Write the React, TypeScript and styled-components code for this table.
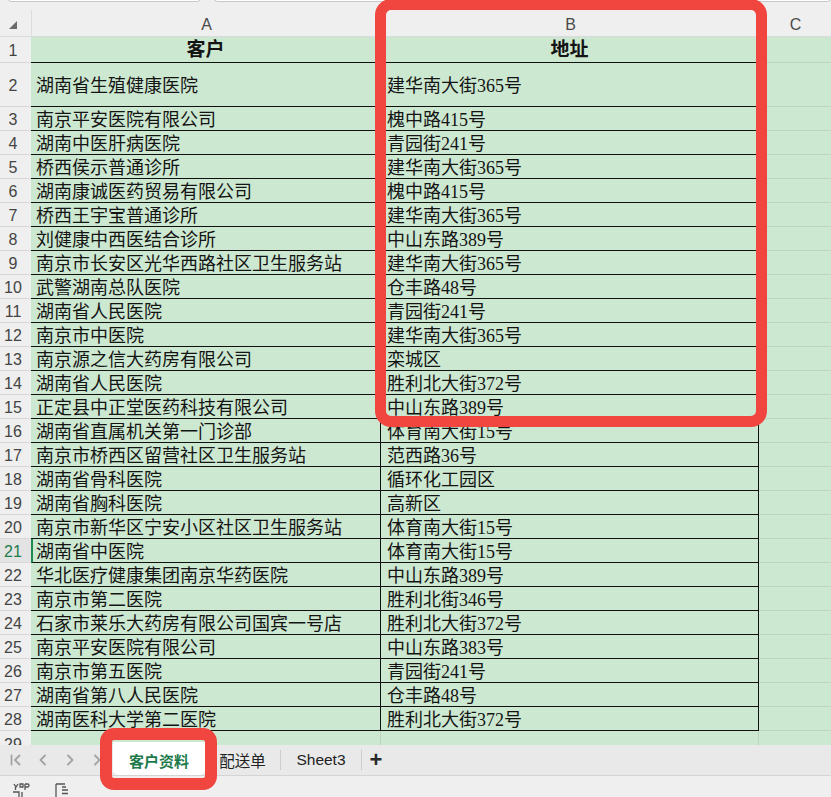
import React from "react";
import styled, { createGlobalStyle } from "styled-components";

const Global = createGlobalStyle`
  html, body { margin: 0; padding: 0; background: #efefef; }
  * { box-sizing: border-box; }
`;

const SERIF = `"Liberation Serif", "Noto Sans CJK SC", serif`;
const SANS = `"Liberation Sans", "Noto Sans CJK SC", sans-serif`;
const GREEN = "#cde8d0";

const Page = styled.div`
  position: relative;
  width: 831px;
  height: 797px;
  overflow: hidden;
  background: #efefef;
  display: flex;
  flex-direction: column;
`;

const TopStrip = styled.div`
  height: 10px;
  display: flex;
  gap: 13px;
  padding-left: 8px;
  background: #efefef;
`;

const InputBox = styled.div<{ $w: number }>`
  width: ${(p) => p.$w}px;
  height: 4px;
  margin-top: -2px;
  background: #fff;
  border: 1px solid #c8c8c8;
  border-top: none;
  border-radius: 0 0 6px 6px;
`;

const Sheet = styled.div`
  display: grid;
  grid-template-columns: 31px 350px 378px 72px;
  grid-template-rows: 27px 26px 44px repeat(26, 24px) 15px;
  overflow: hidden;
`;

const Corner = styled.div`
  background: #efefef;
  display: flex;
  align-items: center;
  padding-left: 9px;
  border-bottom: 1px solid #dadada;
`;

const Tri = styled.div`
  width: 0;
  height: 0;
  border-left: 8px solid transparent;
  border-bottom: 8px solid #6b6b6b;
  margin-top: 4px;
`;

const ColHead = styled.div`
  background: #efefef;
  display: flex;
  align-items: center;
  justify-content: center;
  font-family: ${SANS};
  font-size: 16px;
  color: #4a4a4a;
  border-left: 1px solid #dcdcdc;
  border-bottom: 1px solid #dadada;
  padding-top: 5px;
`;

const RowNum = styled.div<{ $active?: boolean; $cut?: boolean }>`
  background: ${(p) => (p.$active ? "#e3e3e3" : "#efefef")};
  color: ${(p) => (p.$active ? "#1e7b4c" : "#444")};
  font-family: ${SANS};
  font-size: 16px;
  display: flex;
  align-items: ${(p) => (p.$cut ? "flex-start" : "center")};
  justify-content: center;
  padding-right: 5px;
  padding-top: ${(p) => (p.$cut ? 6 : 3)}px;
  border-bottom: 1px solid #d8d8d8;
  line-height: 1;
  overflow: hidden;
`;

const Cell = styled.div<{ $head?: boolean; $active?: boolean; $col: "A" | "B" }>`
  background: ${GREEN};
  border-bottom: 1px solid #111;
  border-right: 1px solid #111;
  border-left: ${(p) => (p.$active ? "2px solid #1e8a50" : "none")};
  font-family: ${SERIF};
  font-size: ${(p) => (p.$head ? "19px" : "18px")};
  font-weight: ${(p) => (p.$head ? 700 : 400)};
  color: #141414;
  display: flex;
  align-items: center;
  justify-content: ${(p) => (p.$head ? "center" : "flex-start")};
  padding-left: ${(p) => (p.$head ? 0 : p.$active ? 3 : p.$col === "A" ? 5 : 6)}px;
  padding-top: ${(p) => (p.$head ? 1 : 3)}px;
  white-space: nowrap;
  overflow: hidden;
  line-height: 1;
`;

const PlainCell = styled.div<{ $edge?: boolean }>`
  background: ${GREEN};
  border-bottom: 1px solid #bfd3c1;
  border-right: 1px solid ${(p) => (p.$edge ? "#bfd3c1" : "transparent")};
`;

const TabBar = styled.div`
  height: 31px;
  display: flex;
  align-items: stretch;
  background: #e9e9e9;
  border-bottom: 1px solid #d4d4d4;
`;

const NavGroup = styled.div`
  width: 113px;
  display: flex;
  align-items: center;
  padding-left: 9px;
  gap: 13px;
`;

const NavIcon = styled.svg`
  width: 14px;
  height: 14px;
  flex: none;
`;

const ActiveTab = styled.div`
  width: 92px;
  margin-top: -3px;
  background: #fff;
  border-radius: 0 0 5px 5px;
  display: flex;
  align-items: center;
  justify-content: center;
  padding-top: 3px;
  font-family: "Noto Sans CJK SC", sans-serif;
  font-weight: 700;
  font-size: 15px;
  color: #1c7a4a;
`;

const Tab = styled.div<{ $w: number }>`
  width: ${(p) => p.$w}px;
  display: flex;
  align-items: center;
  justify-content: center;
  font-family: ${SANS};
  font-size: 15.5px;
  color: #222;
`;

const Sep = styled.div`
  width: 1px;
  align-self: center;
  height: 20px;
  background: #cdcdcd;
`;

const Plus = styled.div`
  width: 28px;
  display: flex;
  align-items: center;
  justify-content: center;
  font-family: ${SANS};
  font-size: 22px;
  font-weight: 700;
  color: #2a2a2a;
`;

const StatusBar = styled.div`
  flex: 1;
  display: flex;
  align-items: flex-start;
  padding: 7px 0 0 12px;
  gap: 24px;
  background: #efefef;
`;

const Mark = styled.div<{ $l: number; $t: number; $w: number; $h: number; $b: number; $r: number }>`
  position: absolute;
  left: ${(p) => p.$l}px;
  top: ${(p) => p.$t}px;
  width: ${(p) => p.$w}px;
  height: ${(p) => p.$h}px;
  border: ${(p) => p.$b}px solid #f0463f;
  border-radius: ${(p) => p.$r}px;
  pointer-events: none;
`;

const rows: [string, string][] = [
  ["湖南省生殖健康医院", "建华南大街365号"],
  ["南京平安医院有限公司", "槐中路415号"],
  ["湖南中医肝病医院", "青园街241号"],
  ["桥西侯示普通诊所", "建华南大街365号"],
  ["湖南康诚医药贸易有限公司", "槐中路415号"],
  ["桥西王宇宝普通诊所", "建华南大街365号"],
  ["刘健康中西医结合诊所", "中山东路389号"],
  ["南京市长安区光华西路社区卫生服务站", "建华南大街365号"],
  ["武警湖南总队医院", "仓丰路48号"],
  ["湖南省人民医院", "青园街241号"],
  ["南京市中医院", "建华南大街365号"],
  ["南京源之信大药房有限公司", "栾城区"],
  ["湖南省人民医院", "胜利北大街372号"],
  ["正定县中正堂医药科技有限公司", "中山东路389号"],
  ["湖南省直属机关第一门诊部", "体育南大街15号"],
  ["南京市桥西区留营社区卫生服务站", "范西路36号"],
  ["湖南省骨科医院", "循环化工园区"],
  ["湖南省胸科医院", "高新区"],
  ["南京市新华区宁安小区社区卫生服务站", "体育南大街15号"],
  ["湖南省中医院", "体育南大街15号"],
  ["华北医疗健康集团南京华药医院", "中山东路389号"],
  ["南京市第二医院", "胜利北街346号"],
  ["石家市莱乐大药房有限公司国宾一号店", "胜利北大街372号"],
  ["南京平安医院有限公司", "中山东路383号"],
  ["南京市第五医院", "青园街241号"],
  ["湖南省第八人民医院", "仓丰路48号"],
  ["湖南医科大学第二医院", "胜利北大街372号"],
];

const Chevron = ({ dir, bar }: { dir: "l" | "r"; bar?: boolean }) => (
  <NavIcon viewBox="0 0 14 14" fill="none" stroke="#a3a3a3" strokeWidth="1.8" strokeLinecap="round" strokeLinejoin="round">
    {bar && <path d="M2.5 2.5v9" />}
    {dir === "l" ? <path d={bar ? "M10.5 2.5L6 7l4.5 4.5" : "M9 2.5L4.5 7 9 11.5"} /> : <path d="M5 2.5L9.5 7 5 11.5" />}
  </NavIcon>
);

export default function App() {
  return (
    <Page>
      <Global />
      <TopStrip>
        <InputBox $w={200} />
        <InputBox $w={640} />
      </TopStrip>
      <Sheet>
        <Corner>
          <Tri />
        </Corner>
        <ColHead>A</ColHead>
        <ColHead>B</ColHead>
        <ColHead>C</ColHead>

        <RowNum>1</RowNum>
        <Cell $col="A" $head>客户</Cell>
        <Cell $col="B" $head>地址</Cell>
        <PlainCell />

        {rows.map(([a, b], i) => {
          const n = i + 2;
          const active = n === 21;
          return (
            <React.Fragment key={n}>
              <RowNum $active={active}>{n}</RowNum>
              <Cell $col="A" $active={active}>{a}</Cell>
              <Cell $col="B">{b}</Cell>
              <PlainCell />
            </React.Fragment>
          );
        })}

        <RowNum $cut>29</RowNum>
        <PlainCell $edge />
        <PlainCell $edge />
        <PlainCell />
      </Sheet>
      <TabBar>
        <NavGroup>
          <Chevron dir="l" bar />
          <Chevron dir="l" />
          <Chevron dir="r" />
          <Chevron dir="r" />
        </NavGroup>
        <ActiveTab>客户资料</ActiveTab>
        <Tab $w={75}>配送单</Tab>
        <Sep />
        <Tab $w={80}>Sheet3</Tab>
        <Sep />
        <Plus>+</Plus>
      </TabBar>
      <StatusBar>
        <svg width="18" height="14" viewBox="0 0 18 14" fill="none" stroke="#555" strokeWidth="1.3">
          <path d="M2 1l2 3 2-3M3.5 4v3M8 1h3v3H8zM13 1v6M13 1h2.5a1.5 1.5 0 0 1 0 3H13M1 9h6v5M10 9v5" />
        </svg>
        <svg width="16" height="14" viewBox="0 0 16 14" fill="none" stroke="#555" strokeWidth="1.3">
          <path d="M2 1h9M2 1v13M8 7h6M8 10.5h6M8 4h4" />
        </svg>
      </StatusBar>

      <Mark $l={375} $t={-1} $w={392} $h={428} $b={11} $r={16} />
      <Mark $l={100} $t={728} $w={117} $h={62} $b={12} $r={14} />
    </Page>
  );
}
